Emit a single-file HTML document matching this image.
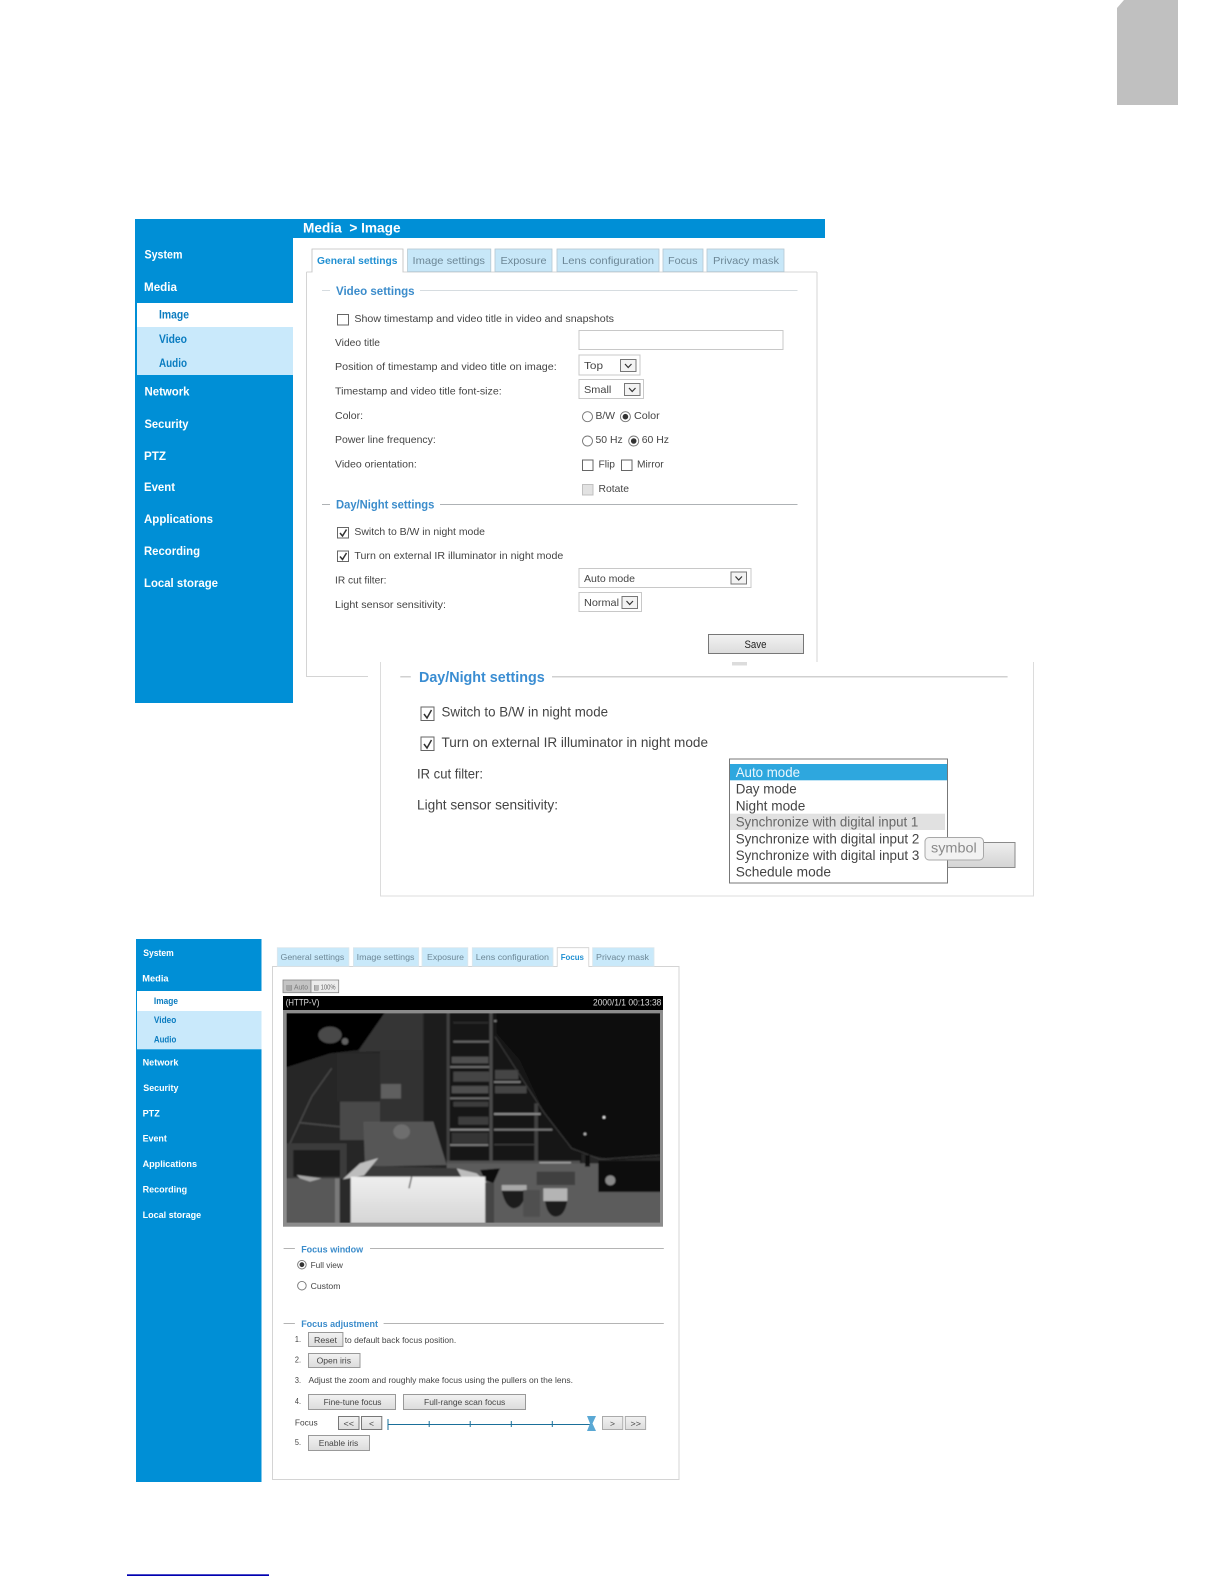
<!DOCTYPE html>
<html><head><meta charset="utf-8"><title>Media Image</title>
<style>
html,body{margin:0;padding:0;background:#fff;width:1224px;height:1584px;overflow:hidden}
svg{display:block;filter:blur(.35px)}
text{font-family:"Liberation Sans",sans-serif;white-space:pre}
.s{font-size:12px;font-weight:bold;fill:#fff}
.sb{font-size:11.5px;font-weight:bold;fill:#0a7cc0}
.t{font-size:10.5px;fill:#6d8796}
.a{font-size:10.5px;font-weight:bold;fill:#2190d2}
.l{font-size:11.5px;font-weight:bold;fill:#3b8ccb}
.b{font-size:10.5px;fill:#444}
.L{font-size:15px;font-weight:bold;fill:#3a8dd2}
.B{font-size:14px;fill:#444}
.d{font-size:14px;fill:#444}
.s3{font-size:9.5px;font-weight:bold;fill:#fff}
.sb3{font-size:9px;font-weight:bold;fill:#0a7cc0}
.t3{font-size:8.5px;fill:#6d8796}
.a3{font-size:8.5px;font-weight:bold;fill:#2190d2}
.l3{font-size:9.5px;font-weight:bold;fill:#3b8ccb}
.b3{font-size:8.5px;fill:#444}
.cb{fill:#fff;stroke:#666;stroke-width:1}
.rd{fill:#fff;stroke:#777;stroke-width:.9}
.ck{fill:none;stroke:#333;stroke-width:1.5}
.sel{fill:#fff;stroke:#c8c8c8;stroke-width:1}
.ar{fill:#f3f3f3;stroke:#777;stroke-width:1}
.chev{fill:none;stroke:#333;stroke-width:1.2}
.btn{fill:url(#g);stroke:#999;stroke-width:1}
.tab{fill:#c7e7f8;stroke:#b4c8d2;stroke-width:.8}
.tab3{fill:#c9e9fa;stroke:#dbe6ec;stroke-width:.8}
</style></head>
<body>
<svg width="1224" height="1584" viewBox="0 0 1224 1584" xmlns="http://www.w3.org/2000/svg">
<defs>
<linearGradient id="g" x1="0" y1="0" x2="0" y2="1"><stop offset="0" stop-color="#f2f2f2"/><stop offset="1" stop-color="#dcdcdc"/></linearGradient>
<linearGradient id="wb" x1="0" y1="0" x2="0" y2="1"><stop offset="0" stop-color="#eeeeee"/><stop offset="1" stop-color="#d4d4d4"/></linearGradient>
<filter id="bl"><feGaussianBlur stdDeviation="3"/></filter>
<filter id="vb" x="-2%" y="-2%" width="104%" height="104%"><feGaussianBlur stdDeviation="2.600"/></filter>
<clipPath id="vc"><rect x="20" y="40" width="1120" height="628"/></clipPath>
</defs>
<rect width="1224" height="1584" fill="#fff"/>

<!-- page corner tab -->
<path d="M1117 105V8L1124 0H1178V105Z" fill="#c0c0c0"/>

<!-- ============ first screenshot ============ -->
<rect x="135" y="219" width="158" height="484" fill="#008fd6"/>
<rect x="293" y="219" width="532" height="19" fill="#008fd6"/>
<text x="303" y="232.500" font-size="14" font-weight="bold" fill="#fff" textLength="97.600" lengthAdjust="spacingAndGlyphs">Media  &gt; Image</text>
<rect x="137" y="303" width="156" height="24" fill="#fff"/>
<rect x="137" y="327" width="156" height="48" fill="#c9e9fb"/>
<text class="s" x="144.500" y="258.500" textLength="38" lengthAdjust="spacingAndGlyphs">System</text>
<text class="s" x="144" y="291" textLength="33" lengthAdjust="spacingAndGlyphs">Media</text>
<text class="sb" x="159" y="318.500" textLength="30" lengthAdjust="spacingAndGlyphs">Image</text>
<text class="sb" x="159" y="343" textLength="28" lengthAdjust="spacingAndGlyphs">Video</text>
<text class="sb" x="159" y="367" textLength="28" lengthAdjust="spacingAndGlyphs">Audio</text>
<text class="s" x="144.500" y="395.500" textLength="45" lengthAdjust="spacingAndGlyphs">Network</text>
<text class="s" x="144.500" y="428" textLength="44" lengthAdjust="spacingAndGlyphs">Security</text>
<text class="s" x="144" y="460" textLength="22" lengthAdjust="spacingAndGlyphs">PTZ</text>
<text class="s" x="144" y="491" textLength="31" lengthAdjust="spacingAndGlyphs">Event</text>
<text class="s" x="144" y="523" textLength="69" lengthAdjust="spacingAndGlyphs">Applications</text>
<text class="s" x="144" y="555" textLength="56" lengthAdjust="spacingAndGlyphs">Recording</text>
<text class="s" x="144" y="587" textLength="74" lengthAdjust="spacingAndGlyphs">Local storage</text>

<!-- panel -->
<path d="M306.500 272V676.500H368M817 272V662M306.500 272H817" fill="none" stroke="#d4d4d4" stroke-width="1"/>
<!-- tabs -->
<rect class="tab" x="407.600" y="249" width="83.200" height="22.700"/>
<rect class="tab" x="495" y="249" width="57" height="22.700"/>
<rect class="tab" x="557" y="249" width="102" height="22.700"/>
<rect class="tab" x="663" y="249" width="40" height="22.700"/>
<rect class="tab" x="707" y="249" width="77" height="22.700"/>
<path d="M312 272V249H403V272" fill="#fff" stroke="#bdbdbd" stroke-width=".8"/>
<rect x="312.500" y="270.500" width="90" height="2" fill="#fff"/>
<text class="a" x="317" y="264" textLength="80.500" lengthAdjust="spacingAndGlyphs">General settings</text>
<text class="t" x="412.500" y="264" textLength="72.500" lengthAdjust="spacingAndGlyphs">Image settings</text>
<text class="t" x="500.500" y="264" textLength="46" lengthAdjust="spacingAndGlyphs">Exposure</text>
<text class="t" x="562" y="264" textLength="92" lengthAdjust="spacingAndGlyphs">Lens configuration</text>
<text class="t" x="668" y="264" textLength="29.500" lengthAdjust="spacingAndGlyphs">Focus</text>
<text class="t" x="713" y="264" textLength="66" lengthAdjust="spacingAndGlyphs">Privacy mask</text>

<!-- Video settings -->
<path d="M322 290.500H330M420 290.500H797.500" stroke="#d6dce0" stroke-width="1"/>
<text class="l" x="336" y="295" textLength="78.600" lengthAdjust="spacingAndGlyphs">Video settings</text>
<rect class="cb" x="337.500" y="314.500" width="11" height="10.500"/>
<text class="b" x="354.400" y="322" textLength="259.600" lengthAdjust="spacingAndGlyphs">Show timestamp and video title in video and snapshots</text>
<text class="b" x="335" y="346" textLength="45" lengthAdjust="spacingAndGlyphs">Video title</text>
<rect class="sel" x="579" y="330.500" width="204" height="19"/>
<text class="b" x="335" y="370" textLength="221.700" lengthAdjust="spacingAndGlyphs">Position of timestamp and video title on image:</text>
<rect class="sel" x="579" y="355" width="61" height="20"/>
<text class="b" x="584" y="369" textLength="19" lengthAdjust="spacingAndGlyphs">Top</text>
<rect class="ar" x="620.500" y="359.500" width="15.500" height="12"/>
<path class="chev" d="M625 364L628.200 367.500L631.500 364"/>
<text class="b" x="335" y="394.500" textLength="166.700" lengthAdjust="spacingAndGlyphs">Timestamp and video title font-size:</text>
<rect class="sel" x="579" y="379.500" width="64.500" height="19"/>
<text class="b" x="584" y="393" textLength="27.300" lengthAdjust="spacingAndGlyphs">Small</text>
<rect class="ar" x="624.500" y="383.500" width="15.500" height="12"/>
<path class="chev" d="M629 388L632.200 391.500L635.500 388"/>
<text class="b" x="335" y="419" textLength="28" lengthAdjust="spacingAndGlyphs">Color:</text>
<circle class="rd" cx="587.500" cy="416.700" r="5"/>
<text class="b" x="595.500" y="419" textLength="19.500" lengthAdjust="spacingAndGlyphs">B/W</text>
<circle class="rd" cx="625.400" cy="416.700" r="5"/><circle cx="625.400" cy="416.700" r="2.800" fill="#333"/>
<text class="b" x="634" y="419" textLength="25.700" lengthAdjust="spacingAndGlyphs">Color</text>
<text class="b" x="335" y="443" textLength="100.800" lengthAdjust="spacingAndGlyphs">Power line frequency:</text>
<circle class="rd" cx="587.500" cy="441" r="5"/>
<text class="b" x="595.500" y="443" textLength="27.200" lengthAdjust="spacingAndGlyphs">50 Hz</text>
<circle class="rd" cx="633.700" cy="441" r="5"/><circle cx="633.700" cy="441" r="2.800" fill="#333"/>
<text class="b" x="641.700" y="443" textLength="27.300" lengthAdjust="spacingAndGlyphs">60 Hz</text>
<text class="b" x="335" y="467.500" textLength="81.800" lengthAdjust="spacingAndGlyphs">Video orientation:</text>
<rect class="cb" x="582.500" y="460" width="10.500" height="10.500"/>
<text class="b" x="598.500" y="467.500" textLength="16.500" lengthAdjust="spacingAndGlyphs">Flip</text>
<rect class="cb" x="621.500" y="460" width="10.500" height="10.500"/>
<text class="b" x="637" y="467.500" textLength="26.700" lengthAdjust="spacingAndGlyphs">Mirror</text>
<rect x="582.500" y="484.500" width="10.500" height="10.500" fill="#e2e2e2" stroke="#c0c0c0"/>
<text class="b" x="598.500" y="492" textLength="30.500" lengthAdjust="spacingAndGlyphs">Rotate</text>

<!-- Day/Night small -->
<path d="M322 504.500H330M440 504.500H797.500" stroke="#aeb2b5" stroke-width="1"/>
<text class="l" x="336" y="508.500" textLength="98.400" lengthAdjust="spacingAndGlyphs">Day/Night settings</text>
<rect class="cb" x="337.500" y="527.500" width="11" height="10.500"/><path class="ck" d="M340 533L342.500 536L346.500 529.500"/>
<text class="b" x="354.400" y="535" textLength="130.600" lengthAdjust="spacingAndGlyphs">Switch to B/W in night mode</text>
<rect class="cb" x="337.500" y="551" width="11" height="10.500"/><path class="ck" d="M340 556.500L342.500 559.500L346.500 553"/>
<text class="b" x="354.400" y="559" textLength="208.900" lengthAdjust="spacingAndGlyphs">Turn on external IR illuminator in night mode</text>
<text class="b" x="335" y="583.500" textLength="51.500" lengthAdjust="spacingAndGlyphs">IR cut filter:</text>
<rect class="sel" x="579" y="568.500" width="172" height="19"/>
<text class="b" x="584" y="582" textLength="51" lengthAdjust="spacingAndGlyphs">Auto mode</text>
<rect class="ar" x="731" y="572" width="15.500" height="12"/>
<path class="chev" d="M735.500 576.500L738.700 580L742 576.500"/>
<text class="b" x="335" y="608" textLength="111" lengthAdjust="spacingAndGlyphs">Light sensor sensitivity:</text>
<rect class="sel" x="579" y="592.500" width="62.500" height="19"/>
<text class="b" x="584" y="606" textLength="35" lengthAdjust="spacingAndGlyphs">Normal</text>
<rect class="ar" x="622" y="596.500" width="15.500" height="12"/>
<path class="chev" d="M626.500 601L629.700 604.500L633 601"/>
<rect x="708.500" y="634.500" width="95" height="19" fill="url(#g)" stroke="#777" stroke-width="1"/>
<text x="744.500" y="648" font-size="11" fill="#222" textLength="22" lengthAdjust="spacingAndGlyphs">Save</text>

<!-- ============ second screenshot ============ -->
<rect x="381" y="662" width="652.500" height="234" fill="#fff"/>
<path d="M380.500 662V896H1033.500V662" fill="none" stroke="#dcdcdc" stroke-width="1"/>
<rect x="732" y="662" width="15" height="3.500" fill="#dcdcdc"/>
<path d="M400.300 676.700H410.800M552 676.700H1007.600" stroke="#d0d0d0" stroke-width="1.500"/>
<text class="L" x="419" y="682" textLength="125.700" lengthAdjust="spacingAndGlyphs">Day/Night settings</text>
<rect class="cb" x="421" y="707" width="13" height="13.500"/><path class="ck" d="M424 714L427 718L431.500 710"/>
<text class="B" x="441.500" y="716.300" textLength="166.500" lengthAdjust="spacingAndGlyphs">Switch to B/W in night mode</text>
<rect class="cb" x="421" y="737" width="13" height="13.500"/><path class="ck" d="M424 744L427 748L431.500 740"/>
<text class="B" x="441.500" y="747" textLength="266.500" lengthAdjust="spacingAndGlyphs">Turn on external IR illuminator in night mode</text>
<text class="B" x="417" y="778.700" textLength="66" lengthAdjust="spacingAndGlyphs">IR cut filter:</text>
<text class="B" x="417" y="809.300" textLength="141" lengthAdjust="spacingAndGlyphs">Light sensor sensitivity:</text>
<!-- hidden save behind -->
<rect x="940" y="842.500" width="75" height="25" fill="url(#wb)" stroke="#8a8a8a" stroke-width="1"/>
<!-- dropdown -->
<rect x="729.500" y="759" width="218" height="124" fill="#fff" stroke="#777" stroke-width="1"/>
<rect x="730" y="764" width="217" height="16.300" fill="#2ea7de"/>
<rect x="730" y="813.700" width="215" height="16.300" fill="#e1e1e1"/>
<text class="d" x="735.700" y="777" style="fill:#eaf6fd" textLength="64.300" lengthAdjust="spacingAndGlyphs">Auto mode</text>
<text class="d" x="735.700" y="793.700" textLength="61" lengthAdjust="spacingAndGlyphs">Day mode</text>
<text class="d" x="735.700" y="810.300" textLength="69.600" lengthAdjust="spacingAndGlyphs">Night mode</text>
<text class="d" x="735.700" y="826.700" style="fill:#666" textLength="182.600" lengthAdjust="spacingAndGlyphs">Synchronize with digital input 1</text>
<text class="d" x="735.700" y="843.300" textLength="183.600" lengthAdjust="spacingAndGlyphs">Synchronize with digital input 2</text>
<text class="d" x="735.700" y="860" textLength="183.600" lengthAdjust="spacingAndGlyphs">Synchronize with digital input 3</text>
<text class="d" x="735.700" y="876.700" textLength="95.300" lengthAdjust="spacingAndGlyphs">Schedule mode</text>
<rect x="925" y="837.500" width="58.500" height="22.500" rx="4" fill="#f2f2f2" stroke="#a8a8a8" stroke-width="1"/>
<text x="931" y="852.500" font-size="14" fill="#8a8a8a" textLength="45.700" lengthAdjust="spacingAndGlyphs">symbol</text>

<!-- ============ third screenshot ============ -->
<rect x="136" y="939" width="125.500" height="543" fill="#008fd6"/>
<rect x="137" y="991" width="124.500" height="20" fill="#fff"/>
<rect x="137" y="1011" width="124.500" height="38.300" fill="#c9e9fb"/>
<text class="s3" x="143.300" y="956" textLength="30.500" lengthAdjust="spacingAndGlyphs">System</text>
<text class="s3" x="142.300" y="981.500" textLength="26.300" lengthAdjust="spacingAndGlyphs">Media</text>
<text class="sb3" x="153.900" y="1004" textLength="24.100" lengthAdjust="spacingAndGlyphs">Image</text>
<text class="sb3" x="153.900" y="1023" textLength="22.400" lengthAdjust="spacingAndGlyphs">Video</text>
<text class="sb3" x="153.900" y="1042.500" textLength="22.400" lengthAdjust="spacingAndGlyphs">Audio</text>
<text class="s3" x="142.600" y="1065.500" textLength="35.800" lengthAdjust="spacingAndGlyphs">Network</text>
<text class="s3" x="143.300" y="1091" textLength="35.100" lengthAdjust="spacingAndGlyphs">Security</text>
<text class="s3" x="142.600" y="1116.500" textLength="17.200" lengthAdjust="spacingAndGlyphs">PTZ</text>
<text class="s3" x="142.600" y="1141.500" textLength="24.200" lengthAdjust="spacingAndGlyphs">Event</text>
<text class="s3" x="142.600" y="1167" textLength="54.400" lengthAdjust="spacingAndGlyphs">Applications</text>
<text class="s3" x="142.600" y="1192.500" textLength="44.600" lengthAdjust="spacingAndGlyphs">Recording</text>
<text class="s3" x="142.600" y="1218" textLength="58.600" lengthAdjust="spacingAndGlyphs">Local storage</text>

<rect x="272.500" y="966.500" width="406.500" height="513" fill="#fff" stroke="#d4d4d4" stroke-width="1"/>
<rect class="tab3" x="277.300" y="947.700" width="71.600" height="18.600"/>
<rect class="tab3" x="353.400" y="947.700" width="65.300" height="18.600"/>
<rect class="tab3" x="422" y="947.700" width="45.800" height="18.600"/>
<rect class="tab3" x="472.300" y="947.700" width="80.700" height="18.600"/>
<rect class="tab3" x="592.600" y="947.700" width="61.400" height="18.600"/>
<path d="M557.200 967V947.700H588.800V967" fill="#fff" stroke="#cfcfcf" stroke-width=".8"/>
<rect x="557.600" y="965.500" width="30.800" height="2" fill="#fff"/>
<text class="t3" x="280.500" y="960" textLength="63.800" lengthAdjust="spacingAndGlyphs">General settings</text>
<text class="t3" x="356.600" y="960" textLength="57.900" lengthAdjust="spacingAndGlyphs">Image settings</text>
<text class="t3" x="427" y="960" textLength="37" lengthAdjust="spacingAndGlyphs">Exposure</text>
<text class="t3" x="475.800" y="960" textLength="73.200" lengthAdjust="spacingAndGlyphs">Lens configuration</text>
<text class="a3" x="560.700" y="960" textLength="23.200" lengthAdjust="spacingAndGlyphs">Focus</text>
<text class="t3" x="596" y="960" textLength="53" lengthAdjust="spacingAndGlyphs">Privacy mask</text>

<rect x="283" y="980" width="28" height="12.700" fill="#c4c4c4" stroke="#888" stroke-width=".8"/>
<rect x="311" y="980" width="27.700" height="12.700" fill="#ececec" stroke="#888" stroke-width=".8"/>
<text x="286" y="989.500" font-size="7" fill="#777" textLength="22" lengthAdjust="spacingAndGlyphs">▤ Auto</text>
<text x="313.500" y="989.500" font-size="7" fill="#666" textLength="22" lengthAdjust="spacingAndGlyphs">▤ 100%</text>

<!-- video -->
<rect x="283" y="996" width="380" height="14" fill="#000"/>
<rect x="283" y="1010" width="380" height="216.700" fill="#8c8c8c"/>
<text x="285.700" y="1005.500" font-size="9" fill="#ddd" textLength="33.700" lengthAdjust="spacingAndGlyphs">(HTTP-V)</text>
<text x="593" y="1005.500" font-size="9" fill="#ddd" textLength="68.400" lengthAdjust="spacingAndGlyphs">2000/1/1 00:13:38</text>
<g transform="translate(280,1000) scale(.33333)" clip-path="url(#vc)"><g filter="url(#vb)">
<rect x="10" y="30" width="1140" height="650" fill="#262626"/>
<path d="M10 30H320L235 150L150 160L10 205Z" fill="#060606"/>
<ellipse cx="150" cy="105" rx="35" ry="25" fill="#484848"/>
<circle cx="195" cy="124" r="10" fill="#606060"/>
<path d="M320 30H430V150L235 155Z" fill="#363636"/>
<path d="M430 30H505V490H490L460 365H430V150Z" fill="#1e1e1e"/>
<rect x="170" y="160" width="130" height="145" fill="#2c2c2c"/>
<rect x="300" y="150" width="130" height="215" fill="#333"/>
<rect x="303" y="252" width="60" height="44" fill="#5e5e5e"/>
<rect x="180" y="305" width="120" height="115" fill="#4a4a4a"/>
<path d="M10 205L170 160V440H10Z" fill="#282828"/>
<path d="M60 368L255 388" stroke="#484848" stroke-width="5"/>
<path d="M30 430L95 290L155 205" stroke="#4a4a4a" stroke-width="4" fill="none"/>
<path d="M250 365H460L500 495L255 500Z" fill="#565656"/>
<ellipse cx="365" cy="395" rx="25" ry="22" fill="#6e6e6e"/>
<!-- shelf -->
<rect x="505" y="30" width="400" height="460" fill="#161616"/>
<rect x="500" y="30" width="9" height="460" fill="#404040"/>
<rect x="628" y="30" width="10" height="460" fill="#484848"/>
<rect x="763" y="310" width="11" height="180" fill="#404040"/>
<g fill="#505050">
<rect x="520" y="65" width="105" height="6" fill="#2c2c2c"/><rect x="642" y="60" width="45" height="6" fill="#777"/>
<rect x="520" y="122" width="108" height="6" fill="#666"/><rect x="515" y="170" width="110" height="20"/>
<rect x="510" y="198" width="118" height="6" fill="#6a6a6a"/><rect x="520" y="215" width="108" height="30" fill="#444"/>
<rect x="645" y="210" width="70" height="28" fill="#444"/><rect x="642" y="243" width="80" height="6" fill="#777"/>
<rect x="515" y="258" width="110" height="22"/><rect x="645" y="258" width="95" height="22" fill="#444"/>
<rect x="510" y="292" width="118" height="6" fill="#6a6a6a"/><rect x="520" y="305" width="105" height="15" fill="#3c3c3c"/>
<rect x="642" y="339" width="140" height="6" fill="#8a8a8a"/><rect x="535" y="350" width="90" height="24" fill="#3c3c3c"/>
<rect x="510" y="386" width="118" height="6" fill="#8a8a8a"/><rect x="642" y="386" width="175" height="6" fill="#777"/>
<rect x="515" y="398" width="110" height="32" fill="#343434"/><rect x="510" y="432" width="115" height="6" fill="#777"/>
<rect x="642" y="432" width="125" height="4" fill="#3c3c3c"/><rect x="500" y="482" width="400" height="10" fill="#505050"/>
<rect x="778" y="486" width="95" height="5" fill="#aaa"/>
</g>
<!-- curtain -->
<path d="M650 30H1150V470L1000 480L900 460L860 430L790 330L720 180L650 100Z" fill="#070707"/>
<path d="M645 110L790 335L875 445L960 478L1150 465" fill="none" stroke="#3c3c3c" stroke-width="3"/>
<circle cx="972" cy="352" r="4" fill="#eee"/><circle cx="915" cy="402" r="4" fill="#bbb"/>
<!-- floor -->
<rect x="500" y="490" width="650" height="190" fill="#5c5c5c"/>
<rect x="955" y="482" width="195" height="94" fill="#0e0e0e"/>
<rect x="915" y="465" width="15" height="35" fill="#111"/>
<circle cx="991" cy="541" r="15" fill="#888"/>
<rect x="770" y="515" width="115" height="40" fill="#404040"/>
<path d="M665 570H740Q730 625 700 625Q675 620 665 570Z" fill="#1c1c1c"/>
<rect x="665" y="555" width="75" height="17" fill="#a8a8a8"/>
<path d="M795 600H862Q855 650 825 650Q800 645 795 600Z" fill="#1c1c1c"/>
<rect x="790" y="565" width="72" height="38" fill="#b4b4b4"/>
<rect x="730" y="570" width="50" height="80" fill="#505050"/>
<path d="M600 510L660 505L640 550L615 540Z" fill="#0c0c0c"/>
<!-- lower left -->
<rect x="10" y="430" width="190" height="250" fill="#3a3a3a"/>
<rect x="40" y="450" width="140" height="80" fill="#1e1e1e"/>
<rect x="10" y="535" width="160" height="145" fill="#585858"/>
<path d="M50 525L125 535L90 545L60 535Z" fill="#a8a8a8"/>
<rect x="170" y="535" width="40" height="145" fill="#2a2a2a"/>
<rect x="165" y="535" width="14" height="145" fill="#7a7a7a"/>
<!-- white box -->
<path d="M255 497L530 505L552 545L245 530Z" fill="#3a3a3a"/>
<path d="M188 538L240 490L295 474L252 526Z" fill="#bdbdbd"/>
<path d="M530 505L590 520L620 548L552 545Z" fill="#bdbdbd"/>
<rect x="212" y="530" width="404" height="150" fill="url(#wb)"/>
<path d="M395 530L387 565" stroke="#555" stroke-width="4"/>
<rect x="616" y="548" width="26" height="132" fill="#444"/>
</g></g>

<!-- Focus window -->
<path d="M283.600 1248.500H294.900M370 1248.500H663.800" stroke="#b4b4b4" stroke-width="1"/>
<text class="l3" x="301.200" y="1252.300" textLength="62" lengthAdjust="spacingAndGlyphs">Focus window</text>
<circle class="rd" cx="301.900" cy="1264.700" r="4.300"/><circle cx="301.900" cy="1264.700" r="2.400" fill="#333"/>
<text class="b3" x="310.600" y="1268" textLength="32.300" lengthAdjust="spacingAndGlyphs">Full view</text>
<circle class="rd" cx="301.900" cy="1285.700" r="4.300"/>
<text class="b3" x="310.600" y="1289" textLength="29.900" lengthAdjust="spacingAndGlyphs">Custom</text>

<!-- Focus adjustment -->
<path d="M283.600 1323.500H294.900M383.600 1323.500H663.800" stroke="#b4b4b4" stroke-width="1"/>
<text class="l3" x="301.200" y="1327" textLength="76.800" lengthAdjust="spacingAndGlyphs">Focus adjustment</text>
<text class="b3" x="294.900" y="1342" textLength="6.100" lengthAdjust="spacingAndGlyphs">1.</text>
<rect class="btn" x="308.500" y="1332.500" width="34.400" height="14"/>
<text class="b3" x="314" y="1343" textLength="23" lengthAdjust="spacingAndGlyphs">Reset</text>
<text class="b3" x="344.700" y="1343" textLength="111.500" lengthAdjust="spacingAndGlyphs">to default back focus position.</text>
<text class="b3" x="294.900" y="1362.300" textLength="6.100" lengthAdjust="spacingAndGlyphs">2.</text>
<rect class="btn" x="308.500" y="1353.500" width="51.500" height="14"/>
<text class="b3" x="316.600" y="1363.500" textLength="34.400" lengthAdjust="spacingAndGlyphs">Open iris</text>
<text class="b3" x="294.900" y="1383" textLength="6.100" lengthAdjust="spacingAndGlyphs">3.</text>
<text class="b3" x="308.500" y="1383" textLength="264.500" lengthAdjust="spacingAndGlyphs">Adjust the zoom and roughly make focus using the pullers on the lens.</text>
<text class="b3" x="294.900" y="1404" textLength="6.100" lengthAdjust="spacingAndGlyphs">4.</text>
<rect class="btn" x="308.500" y="1394.500" width="87" height="15"/>
<text class="b3" x="323.600" y="1405" textLength="57.900" lengthAdjust="spacingAndGlyphs">Fine-tune focus</text>
<rect class="btn" x="403.500" y="1394.500" width="122" height="15"/>
<text class="b3" x="424" y="1405" textLength="81.300" lengthAdjust="spacingAndGlyphs">Full-range scan focus</text>
<text class="b3" x="294.900" y="1425.700" textLength="22.800" lengthAdjust="spacingAndGlyphs">Focus</text>
<rect x="338.500" y="1416.500" width="20.500" height="13" fill="url(#g)" stroke="#777"/>
<text class="b3" x="343.500" y="1426.300" textLength="10.500" lengthAdjust="spacingAndGlyphs">&lt;&lt;</text>
<rect x="361.500" y="1416.500" width="20.300" height="13" fill="url(#g)" stroke="#777"/>
<text class="b3" x="369" y="1426.300" textLength="5" lengthAdjust="spacingAndGlyphs">&lt;</text>
<path d="M388 1424.500H590M388 1419V1430M429.200 1421V1427M470.200 1421V1427M511.300 1421V1427M552.300 1421V1427" fill="none" stroke="#1a6f9a" stroke-width="1"/>
<path d="M587 1416H596L592.500 1423.500L596 1431H587L590 1423.500Z" fill="#5aa8d4"/>
<rect x="602.500" y="1416.500" width="20.300" height="13" fill="url(#g)" stroke="#aaa"/>
<text class="b3" x="610" y="1426.300" textLength="5" lengthAdjust="spacingAndGlyphs">&gt;</text>
<rect x="625.300" y="1416.500" width="20.300" height="13" fill="url(#g)" stroke="#aaa"/>
<text class="b3" x="630.500" y="1426.300" textLength="10.500" lengthAdjust="spacingAndGlyphs">&gt;&gt;</text>
<text class="b3" x="294.900" y="1445" textLength="6.100" lengthAdjust="spacingAndGlyphs">5.</text>
<rect class="btn" x="308.500" y="1435.500" width="61" height="15"/>
<text class="b3" x="318.700" y="1446" textLength="39.600" lengthAdjust="spacingAndGlyphs">Enable iris</text>

<!-- footer rule -->
<rect x="127" y="1574.300" width="142" height="1.700" fill="#0000b0"/>
</svg>
</body></html>
